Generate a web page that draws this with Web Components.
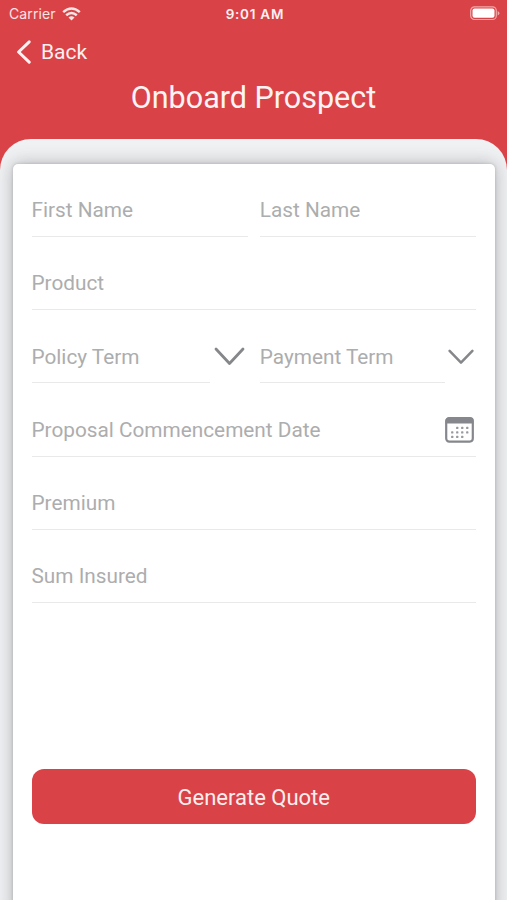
<!DOCTYPE html>
<html lang="en">
<head>
<meta charset="utf-8">
<title>Onboard Prospect</title>
<style>
html, body { margin: 0; height: 100%; overflow: hidden; }
body { font-family: Roboto, "Liberation Sans", sans-serif; --brand: #d94348; background: var(--brand); }
</style>
</head>
<body>
<app-screen>
  <status-bar slot="top" carrier="Carrier" time="9:01 AM"></status-bar>
  <nav-header slot="top" back="Back">Onboard Prospect</nav-header>
  <form-card>
    <field-row>
      <form-field>First Name</form-field>
      <form-field>Last Name</form-field>
    </field-row>
    <field-row><form-field>Product</form-field></field-row>
    <field-row>
      <form-field icon="chevron-large">Policy Term</form-field>
      <form-field icon="chevron">Payment Term</form-field>
    </field-row>
    <field-row><form-field icon="calendar">Proposal Commencement Date</form-field></field-row>
    <field-row><form-field>Premium</form-field></field-row>
    <field-row><form-field>Sum Insured</form-field></field-row>
    <primary-button slot="action">Generate Quote</primary-button>
  </form-card>
</app-screen>
<script>
function define(name, render) {
  customElements.define(name, class extends HTMLElement {
    connectedCallback() {
      if (!this.shadowRoot) this.attachShadow({ mode: "open" }).innerHTML = render(this);
    }
  });
}

define("app-screen", () => `
  <style>
    :host { display: flex; flex-direction: column; height: 900px; width: 507px; background: var(--brand); overflow: hidden; }
    main { flex: 1; min-height: 0; background: #f0f1f3; border-radius: 31px 31px 0 0; padding: 24.5px 12.5px 0 13px; overflow: hidden; }
  </style>
  <slot name="top"></slot>
  <main><slot></slot></main>`);

define("status-bar", el => `
  <style>
    :host { display: grid; grid-template-columns: 1fr auto 1fr; align-items: center; height: 27px; padding: 0 7px 0 9px; box-sizing: border-box;
      color: #fff; font-family: Inter, sans-serif; font-size: 14px; flex: none; }
    .carrier { display: flex; align-items: center; gap: 6px; opacity: .86; letter-spacing: .1px; }
    .time { font-size: 13.5px; font-weight: 600; opacity: .93; letter-spacing: .75px; margin-right: -.75px; }
    .battery { justify-self: end; }
    svg { display: block; }
  </style>
  <div class="carrier"><span>${el.getAttribute("carrier")}</span>
    <svg width="19" height="14" viewBox="0 0 19 14" fill="none" stroke="#fff" stroke-width="2.5">
      <path d="M1.2 5.1 Q9.5 -2 17.8 5.1"/><path d="M4.2 8.2 Q9.5 3.7 14.8 8.2"/>
      <path d="M9.5 13.4 L6.5 10.4 Q9.5 8 12.5 10.4 Z" fill="#fff" stroke="none"/>
    </svg></div>
  <div class="time">${el.getAttribute("time")}</div>
  <svg class="battery" width="30" height="15" viewBox="0 0 30 15">
    <rect x=".7" y=".9" width="25.6" height="12.6" rx="3.8" fill="none" stroke="#f3a9a9" stroke-width="1.2"/>
    <rect x="2.5" y="2.6" width="22" height="9.2" rx="2" fill="#fff"/>
    <path d="M27.7 5 Q29.4 5.8 29.4 7.2 Q29.4 8.6 27.7 9.4Z" fill="#f3a9a9"/>
  </svg>`);

define("nav-header", el => `
  <style>
    :host { display: flex; flex-direction: column; height: 112.3px; flex: none; color: #fff; }
    .back { display: flex; align-items: center; height: 50px; padding-left: 16px; gap: 10px; font-size: 21px; opacity: .92; }
    h1 { margin: 0; height: 42px; line-height: 42px; text-align: center; font-size: 30.5px; font-weight: 400; opacity: .94; }
  </style>
  <div class="back">
    <svg width="15" height="24" viewBox="0 0 15 24" fill="none" stroke="#fff" stroke-width="3" stroke-linecap="round" stroke-linejoin="round"><path d="M13.2 1.8 L2.6 12 L13.2 22.2"/></svg>
    <span>${el.getAttribute("back")}</span></div>
  <h1><slot></slot></h1>`);

define("form-card", () => `
  <style>
    :host { display: flex; flex-direction: column; height: 760px; box-sizing: border-box; background: #fff; border-radius: 5px;
      padding: 0 18.5px; box-shadow: 0 0 3px rgba(70,72,75,.25), 0 0 17px rgba(70,72,75,.38); }
    .action { margin-top: 165.5px; }
  </style>
  <slot></slot>
  <div class="action"><slot name="action"></slot></div>`);

define("field-row", () => `
  <style>
    :host { display: flex; gap: 12px; height: 73.3px; }
    ::slotted(*) { flex: 1 1 0; min-width: 0; }
  </style><slot></slot>`);

const icons = {
  "chevron-large": `<svg width="31" height="19" viewBox="0 0 31 19" fill="none" stroke="#85878a" stroke-width="2.8" stroke-linecap="round" stroke-linejoin="round"><path d="M2 2 L15.5 16.5 L29 2"/></svg>`,
  "chevron": `<svg width="26" height="16" viewBox="0 0 26 16" fill="none" stroke="#85878a" stroke-width="2.5" stroke-linecap="round" stroke-linejoin="round"><path d="M1.6 1.8 L13 13.6 L24.4 1.8"/></svg>`,
  "calendar": `<svg width="29" height="26" viewBox="0 0 29 26"><rect x="1.2" y="1.2" width="26.6" height="23.4" rx="3" fill="#fff" stroke="#85878c" stroke-width="2.2"/>
    <path d="M.5 6.6 V4 Q.5 .4 4 .4 H25 Q28.5 .4 28.5 4 V6.6 Z" fill="#85878c"/>
    <g fill="#97999d">${[[12, 10], [17, 10], [22, 10], [7, 14.5], [12, 14.5], [17, 14.5], [22, 14.5], [7, 19], [12, 19], [17, 19]]
      .map(([x, y]) => `<rect x="${x - 0.9}" y="${y - 0.2}" width="2.3" height="2.3" rx=".7"/>`).join("")}</g></svg>`
};

define("form-field", el => {
  const icon = el.getAttribute("icon");
  const inset = { "chevron-large": 38, "chevron": 31 }[icon] || 0;
  const side = { "chevron-large": 3, "chevron": 2.5, "calendar": 2.5 }[icon] || 0;
  return `
  <style>
    :host { display: grid; grid-template-columns: 1fr auto; height: 73.3px; padding-top: 19px; box-sizing: border-box;
      align-items: center; color: #acadae; font-size: 20.78px; white-space: nowrap;
      background: linear-gradient(#e9e9ea, #e9e9ea) 0 100% / calc(100% - ${inset}px) 1.4px no-repeat; }
    svg { display: block; margin-right: ${side}px; }
  </style>
  <span><slot></slot></span>${icons[icon] || ""}`;
});

define("primary-button", () => `
  <style>
    :host { display: block; }
    button { display: block; width: 100%; height: 55px; border: 0; border-radius: 12px; padding: 1px 0 0; background: var(--brand);
      color: #fdeeee; font: 400 22px Roboto, sans-serif; }
  </style>
  <button><slot></slot></button>`);
</script>
</body>
</html>
